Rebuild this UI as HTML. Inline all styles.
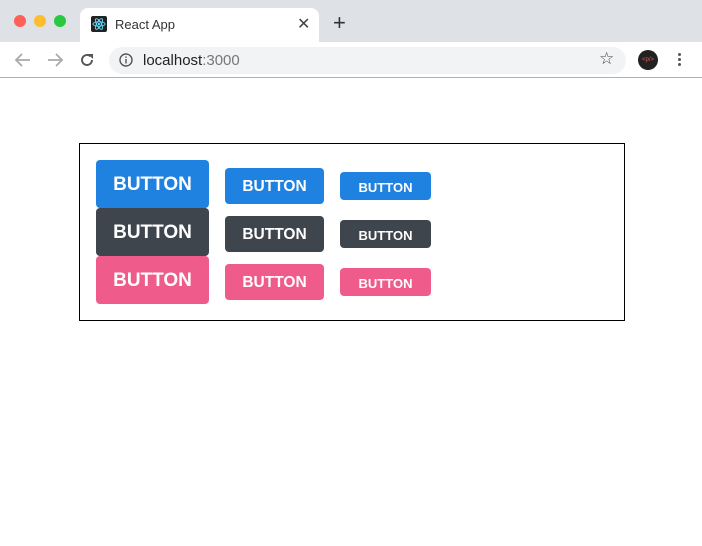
<!DOCTYPE html>
<html><head><style>
*{box-sizing:border-box;margin:0;padding:0}
body{width:702px;height:546px;position:relative;background:#fff;font-family:"Liberation Sans",sans-serif;overflow:hidden}
.top{position:absolute;left:0;top:0;width:702px;height:42px;background:#dee1e6}
.dot{position:absolute;top:15px;width:12px;height:12px;border-radius:50%}
.tab{position:absolute;left:80px;top:8px;width:239px;height:36px;background:#fff;border-radius:8px 8px 0 0}
.bar{position:absolute;left:0;top:42px;width:702px;height:36px;background:#fff;border-bottom:1px solid #b0b0b0}
.url{position:absolute;left:109px;top:47px;width:517px;height:27px;background:#f1f3f4;border-radius:14px}
.box{position:absolute;left:79px;top:143px;width:546px;height:178px;border:1px solid #000}
.b{position:absolute;color:#fff;font-weight:bold;display:flex;align-items:center;justify-content:center;border-radius:4px;padding-top:2px}
.L{left:96px;width:113px;height:48px;font-size:19px}
.M{left:225px;width:99px;height:36px;font-size:15.5px}
.S{left:340px;width:91px;height:28px;font-size:13px}
.bl{background:#1f82e0}.dk{background:#3f454d}.pk{background:#ef5c8c}
</style></head><body>
<div class="top"></div>
<div class="dot" style="left:14px;background:#fe5f57"></div>
<div class="dot" style="left:34px;background:#febc2e"></div>
<div class="dot" style="left:54px;background:#28c840"></div>
<div class="tab">
 <div style="position:absolute;left:11px;top:8px;width:16px;height:16px;background:#222;border-radius:2px">
  <svg width="16" height="16" viewBox="0 0 16 16"><g fill="none" stroke="#61dafb" stroke-width="0.9"><ellipse cx="8" cy="8" rx="6" ry="2.3"/><ellipse cx="8" cy="8" rx="6" ry="2.3" transform="rotate(60 8 8)"/><ellipse cx="8" cy="8" rx="6" ry="2.3" transform="rotate(120 8 8)"/></g><circle cx="8" cy="8" r="1.2" fill="#61dafb"/></svg>
 </div>
 <div style="position:absolute;left:35px;top:9px;font-size:13px;color:#333">React App</div>
 <div style="position:absolute;left:217px;top:6px;font-size:16px;color:#444">✕</div>
</div>
<div style="position:absolute;left:333px;top:12px;font-size:22px;color:#333;line-height:22px">+</div>
<div class="bar"></div>
<svg style="position:absolute;left:14px;top:52px" width="18" height="16"><path d="M16 8H3M8 2L2 8l6 6" stroke="#aaa" stroke-width="1.8" fill="none"/></svg>
<svg style="position:absolute;left:46px;top:52px" width="18" height="16"><path d="M2 8h13M10 2l6 6-6 6" stroke="#aaa" stroke-width="1.8" fill="none"/></svg>
<svg style="position:absolute;left:79px;top:52px" width="16" height="16"><path d="M13 8a5 5 0 1 1-1.5-3.6" stroke="#555" stroke-width="1.9" fill="none"/><path d="M9 2h5v5z" fill="#555"/></svg>
<div class="url"></div>
<svg style="position:absolute;left:119px;top:53px" width="14" height="14"><circle cx="7" cy="7" r="6" stroke="#555" stroke-width="1.4" fill="none"/><rect x="6.3" y="6" width="1.4" height="4.5" fill="#555"/><rect x="6.3" y="3.5" width="1.4" height="1.4" fill="#555"/></svg>
<div style="position:absolute;left:143px;top:52px;font-size:15px;color:#222">localhost<span style="color:#777">:3000</span></div>
<div style="position:absolute;left:599px;top:49px;font-size:17px;color:#444">☆</div>
<div style="position:absolute;left:638px;top:50px;width:20px;height:20px;border-radius:50%;background:#222;color:#e55;font-size:6px;line-height:20px;text-align:center">&lt;p/&gt;</div>
<div style="position:absolute;left:678px;top:53px;width:4px">
 <div style="width:3px;height:3px;background:#555;border-radius:50%;margin-bottom:2px"></div>
 <div style="width:3px;height:3px;background:#555;border-radius:50%;margin-bottom:2px"></div>
 <div style="width:3px;height:3px;background:#555;border-radius:50%"></div>
</div>
<div class="box"></div>
<div class="b L bl" style="top:160px">BUTTON</div>
<div class="b M bl" style="top:168px">BUTTON</div>
<div class="b S bl" style="top:172px">BUTTON</div>
<div class="b L dk" style="top:208px">BUTTON</div>
<div class="b M dk" style="top:216px">BUTTON</div>
<div class="b S dk" style="top:220px">BUTTON</div>
<div class="b L pk" style="top:256px">BUTTON</div>
<div class="b M pk" style="top:264px">BUTTON</div>
<div class="b S pk" style="top:268px">BUTTON</div>
</body></html>
